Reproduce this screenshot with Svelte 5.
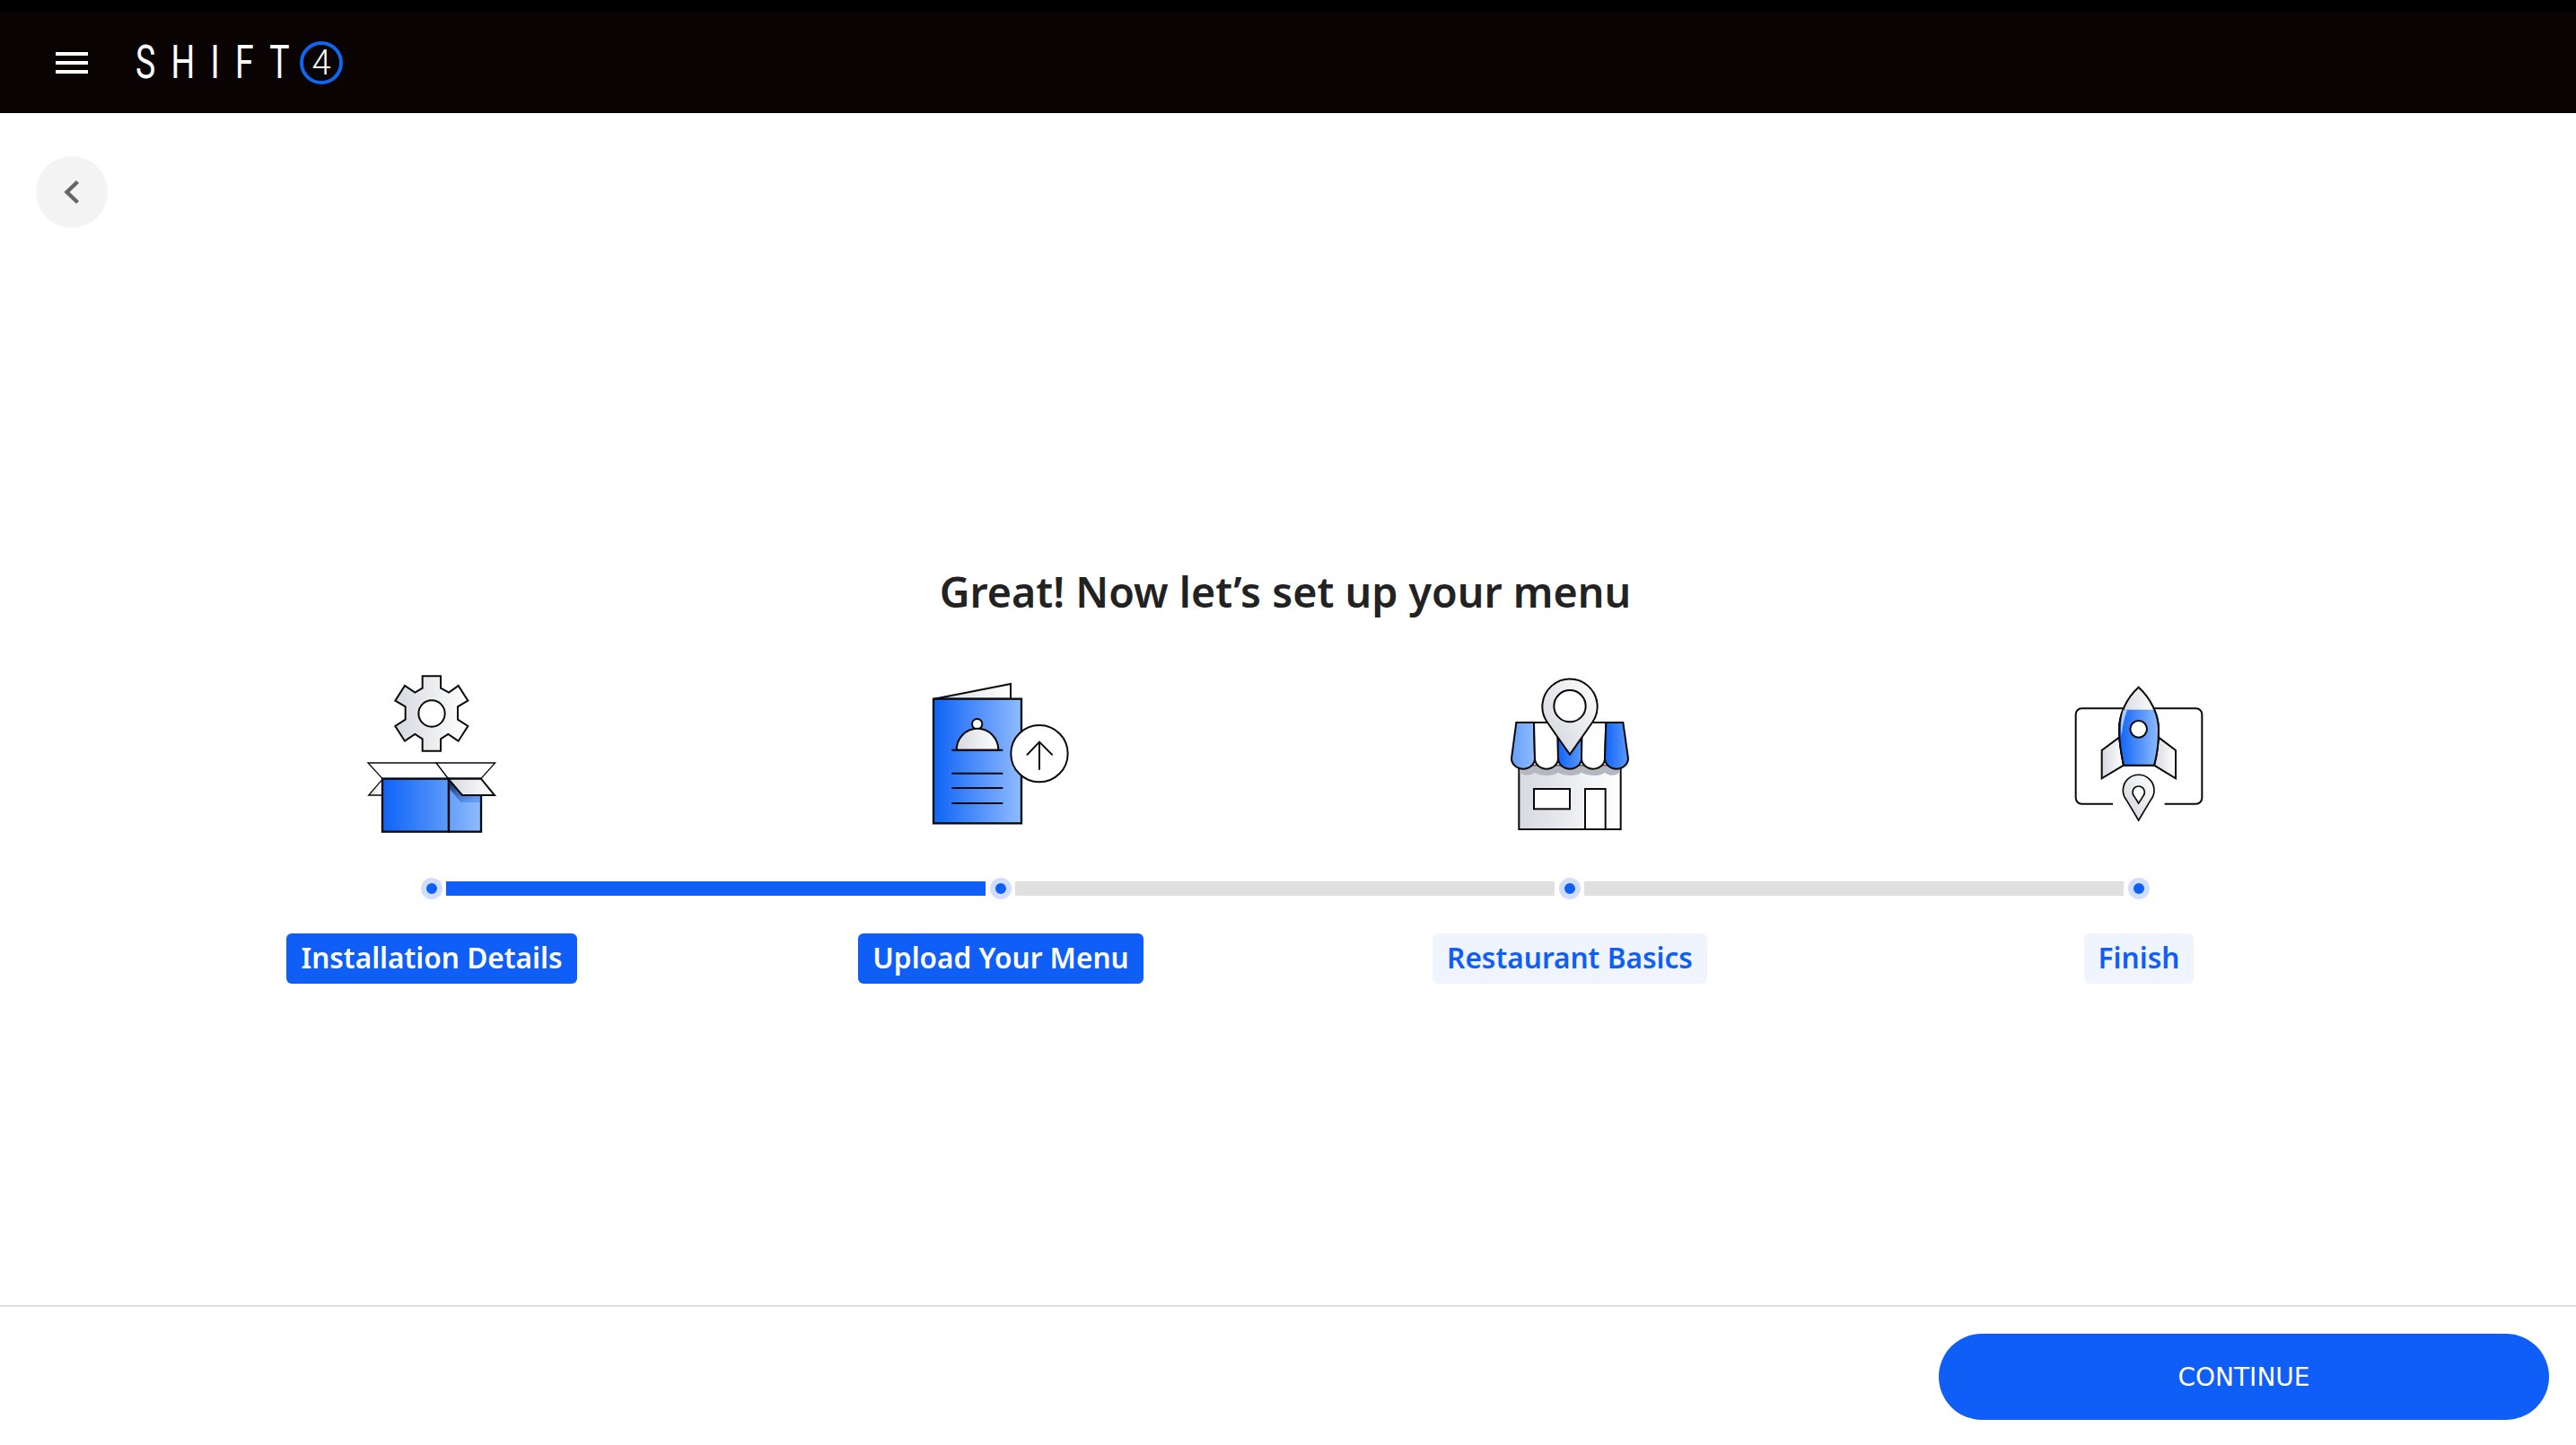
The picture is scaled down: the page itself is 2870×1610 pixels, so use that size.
<script>
  const steps = [
    { label: 'Installation Details', done: true },
    { label: 'Upload Your Menu', done: true },
    { label: 'Restaurant Basics', done: false },
    { label: 'Finish', done: false }
  ];
</script>

<div class="page">
  <header class="topbar">
    <button class="menu-button" aria-label="Menu"><span></span><span></span><span></span></button>
    <div class="logo">
      <span class="logo-word">SHIFT</span>
      <span class="logo-four">4</span>
    </div>
  </header>

  <main class="content">
    <button class="back-button" aria-label="Back">
      <svg viewBox="0 0 32 32" width="32" height="32">
        <path d="M22.5 4.5 10.5 16l12 11.5" fill="none" stroke="#666" stroke-width="4.4" />
      </svg>
    </button>

    <div class="wizard">
      <h1>Great! Now let’s set up your menu</h1>

      <svg width="0" height="0" class="defs">
        <defs>
          <linearGradient id="grey"><stop offset="0" stop-color="#d6d9e0" /><stop offset="1" stop-color="#fff" /></linearGradient>
          <linearGradient id="blue"><stop offset="0" stop-color="#0f63f8" /><stop offset="1" stop-color="#8fbbfd" /></linearGradient>
          <linearGradient id="front"><stop offset="0" stop-color="#0f63f8" /><stop offset="1" stop-color="#5c9afb" /></linearGradient>
          <linearGradient id="side"><stop offset="0" stop-color="#65a0fb" /><stop offset="1" stop-color="#8fbbfd" /></linearGradient>
          <linearGradient id="fold" x1="0" y1="0" x2="0.6" y2="1"><stop offset="0" stop-color="#0b1a3a" /><stop offset="1" stop-color="#3f7fe8" stop-opacity="0.5" /></linearGradient>
          <linearGradient id="pin" x1="0" y1="1" x2="1" y2="0"><stop offset="0" stop-color="#cfd2da" /><stop offset="1" stop-color="#fff" /></linearGradient>
          <clipPath id="rocket-lower"><rect x="150" y="122" width="260" height="200" /></clipPath>
        </defs>
      </svg>

      <div class="icons">
        <svg viewBox="-27 45 660 600" width="220" height="200">
          <g stroke="#0a0a0a" stroke-width="6" stroke-linejoin="miter">
            <path fill="url(#grey)" d="M272 70H333V110L360 125 392 102 424 152 390 172V215L424 237 392 287 358 264 333 280V320H272V280L247 264 213 287 181 237 215 215V172L181 152 213 102 247 125 272 110Z" />
            <circle cx="303" cy="195" r="44" fill="#fff" />
            <path fill="#fff" stroke-width="4" d="M90 360H318L358 412H138Z" />
            <path fill="#fff" stroke-width="4" d="M318 360H515L468 412H358Z" />
            <path fill="url(#grey)" stroke-width="4" d="M138 415 92 468H138Z" />
            <rect x="138" y="413" width="222" height="177" fill="url(#front)" stroke-width="7" />
            <rect x="360" y="413" width="108" height="177" fill="url(#side)" stroke-width="7" />
            <path fill="url(#fold)" stroke="none" d="M362 416 405 468H466V492H400L362 446Z" />
            <path fill="url(#grey)" d="M358 413H468L513 468H405Z" />
          </g>
        </svg>

        <svg viewBox="-15 15 660 600" width="220" height="200">
          <g stroke="#0a0a0a" stroke-width="6">
            <path fill="url(#grey)" d="M92 116 348 66V116Z" />
            <rect x="90" y="116" width="294" height="416" fill="url(#blue)" stroke-width="7" />
            <circle cx="236" cy="200" r="17" fill="#fff" />
            <path fill="url(#grey)" d="M167 287A70 72 0 0 1 307 287Z" />
            <path fill="none" d="M151 287H322M151 365H322M151 414H322M151 465H322" />
            <circle cx="444" cy="299" r="95" fill="#fff" />
            <path fill="none" d="M444 353V260M402 304 444 260 488 304" />
          </g>
        </svg>

        <svg viewBox="-63 15 660 600" width="220" height="200">
          <g stroke="#0a0a0a" stroke-width="6">
            <rect x="97" y="340" width="340" height="212" fill="url(#grey)" />
            <path fill="#b4b7bf" stroke="none" d="M99 340H435V360C420 375 400 375 384 362 370 375 330 375 306 362 290 375 250 375 228 362 210 375 170 375 150 362 130 375 112 372 99 362Z" />
            <rect x="147" y="417" width="120" height="67" fill="#fff" />
            <rect x="318" y="417" width="68" height="135" fill="#fff" />
            <path fill="url(#side)" d="M88 195H147L150 315A39 35 0 0 1 72 315Z" />
            <path fill="#fff" d="M147 195H226L228 315A39 35 0 0 1 150 315Z" />
            <path fill="url(#front)" d="M226 195H308L306 315A39 35 0 0 1 228 315Z" />
            <path fill="#fff" d="M308 195H388L384 315A39 35 0 0 1 306 315Z" />
            <path fill="url(#front)" d="M388 195H445L462 315A39 35 0 0 1 384 315Z" />
            <path fill="url(#pin)" d="M267 302 192 195A92 92 0 1 1 342 195Z" />
            <circle cx="267" cy="140" r="53" fill="#fff" />
          </g>
        </svg>

        <svg viewBox="-51 -15 660 600" width="220" height="200">
          <g stroke="#0a0a0a" stroke-width="6">
            <path fill="none" d="M192 437H88A20 20 0 0 1 68 417V138A20 20 0 0 1 88 118H470A20 20 0 0 1 490 138V417A20 20 0 0 1 470 437H365" />
            <path fill="url(#grey)" d="M213 215 155 258V352L228 308Z" />
            <path fill="url(#grey)" d="M345 215 402 258V352L330 308Z" />
            <path fill="url(#grey)" d="M278 47C235 85 213 140 213 190 213 235 222 280 228 308H330C338 280 345 235 345 190 345 140 320 85 278 47Z" />
            <path fill="url(#blue)" clip-path="url(#rocket-lower)" d="M278 47C235 85 213 140 213 190 213 235 222 280 228 308H330C338 280 345 235 345 190 345 140 320 85 278 47Z" />
            <path fill="#fff" fill-opacity="0.65" stroke="none" d="M226 124C219 150 217 180 221 212 224 180 229 150 240 124Z" />
            <circle cx="278" cy="187" r="28" fill="#fff" />
            <path fill="url(#pin)" stroke-width="5" d="M278 492 238 425A52 52 0 1 1 318 425Z" />
            <path fill="#fff" stroke-width="5" d="M278 435 262 410A20 20 0 1 1 294 410Z" />
          </g>
        </svg>
      </div>

      <div class="track">
        {#each steps as step, i}
          <span class="dot"></span>
          {#if i < steps.length - 1}
            <span class="segment" class:filled={i === 0}></span>
          {/if}
        {/each}
      </div>

      <div class="labels">
        {#each steps as step}
          <div class="label-cell">
            <span class="label" class:active={step.done}>{step.label}</span>
          </div>
        {/each}
      </div>
    </div>
  </main>

  <footer class="footer">
    <button class="continue">CONTINUE</button>
  </footer>
</div>

<style>
  :global(body) {
    margin: 0;
    background: #fff;
    font-family: "Noto Sans", "Open Sans", sans-serif;
  }

  .page {
    display: flex;
    flex-direction: column;
    min-height: 1610px;
  }

  .topbar {
    display: flex;
    align-items: center;
    height: 112px;
    border-top: 14px solid #000;
    background: #0a0304;
    padding-left: 62px;
  }

  .menu-button {
    display: flex;
    flex-direction: column;
    gap: 6px;
    width: 36px;
    padding: 0;
    margin-top: -1px;
    border: 0;
    background: none;
  }

  .menu-button span {
    height: 4px;
    background: #fff;
  }

  .logo {
    display: flex;
    align-items: center;
    margin-left: 53px;
    color: #fff;
  }

  .logo-word {
    display: inline-block;
    width: 183px;
    font-family: "Roboto", sans-serif;
    font-weight: 400;
    font-size: 52px;
    line-height: 52px;
    letter-spacing: 24px;
    white-space: nowrap;
    transform: scaleX(0.72);
    transform-origin: left center;
  }

  .logo-four {
    display: flex;
    align-items: center;
    justify-content: center;
    width: 40px;
    height: 40px;
    border: 4px solid #0f66f0;
    border-radius: 50%;
    font-family: "Roboto", sans-serif;
    font-weight: 300;
    font-size: 38px;
    line-height: 1;
  }

  .content {
    flex: 1;
  }

  .back-button {
    display: flex;
    align-items: center;
    justify-content: center;
    width: 80px;
    height: 80px;
    margin: 48px 0 0 40px;
    padding: 0;
    border: 0;
    border-radius: 50%;
    background: #f4f4f4;
  }

  .wizard {
    width: 2536px;
    margin-left: 164px;
  }

  h1 {
    margin: 372px 0 0;
    text-align: center;
    color: #222;
    font-size: 46.6px;
    font-weight: 600;
    line-height: 66px;
  }

  .defs {
    position: absolute;
  }

  .icons,
  .labels {
    display: grid;
    grid-template-columns: repeat(4, 634px);
  }

  .icons {
    margin-top: 53px;
    justify-items: center;
  }

  .icons svg {
    display: block;
  }

  .track {
    display: flex;
    align-items: center;
    height: 24px;
    margin-top: 33px;
    padding: 0 305px;
  }

  .dot {
    flex: none;
    width: 12px;
    height: 12px;
    border: 6px solid #d0ddfd;
    border-radius: 50%;
    background: #0f5ef7;
  }

  .segment {
    flex: 1;
    height: 16px;
    margin: 0 5px 0 4px;
    background: #e0e0e0;
  }

  .segment.filled {
    background: #0f5ef7;
  }

  .labels {
    margin-top: 38px;
  }

  .label-cell {
    display: flex;
    justify-content: center;
  }

  .label {
    height: 56px;
    padding: 0 16px;
    border-radius: 6px;
    background: #f0f4fe;
    color: #0f5ef7;
    font-size: 31.6px;
    font-weight: 600;
    line-height: 54px;
    white-space: nowrap;
  }

  .label.active {
    background: #0f5ef7;
    color: #fff;
  }

  .footer {
    display: flex;
    justify-content: flex-end;
    height: 156px;
    border-top: 2px solid #e0e0e0;
    padding: 30px 30px 0 0;
    box-sizing: border-box;
  }

  .continue {
    width: 680px;
    height: 96px;
    border: 0;
    border-radius: 48px;
    background: #0f5ef7;
    color: #fff;
    font-family: "DejaVu Sans", sans-serif;
    font-size: 28px;
  }
</style>
